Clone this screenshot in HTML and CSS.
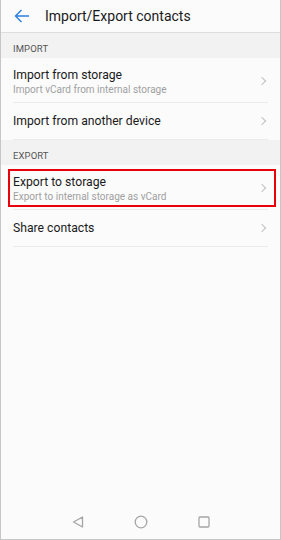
FILE: index.html
```html
<!DOCTYPE html>
<html>
<head>
<meta charset="utf-8">
<link rel="stylesheet" href="styles.css">
</head>
<body>
<div class="screen">
  <header class="appbar">
    <svg class="back" width="16" height="14" viewBox="0 0 16 14"><path d="M15 7H1.5M7.5 1L1.5 7l6 6" fill="none" stroke="#2b7fe0" stroke-width="1.4"/></svg>
    <div class="title">Import/Export contacts</div>
  </header>
  <div class="section">IMPORT</div>
  <div class="row tall">
    <div class="texts"><div class="t">Import from storage</div><div class="s">Import vCard from internal storage</div></div>
    <span class="chev"></span>
  </div>
  <div class="row">
    <div class="texts"><div class="t">Import from another device</div></div>
    <span class="chev"></span>
  </div>
  <div class="section">EXPORT</div>
  <div class="row tall hl">
    <div class="texts"><div class="t">Export to storage</div><div class="s">Export to internal storage as vCard</div></div>
    <span class="chev"></span>
  </div>
  <div class="row">
    <div class="texts"><div class="t">Share contacts</div></div>
    <span class="chev"></span>
  </div>
  <nav class="navbar">
    <svg width="12" height="12" viewBox="0 0 12 12"><path d="M10.5 1v10L1.5 6z" fill="none" stroke="#a5a5a5" stroke-width="1.3" stroke-linejoin="round"/></svg>
    <svg width="14" height="14" viewBox="0 0 14 14"><circle cx="7" cy="7" r="5.8" fill="none" stroke="#a5a5a5" stroke-width="1.3"/></svg>
    <svg width="12" height="12" viewBox="0 0 12 12"><rect x="1" y="1" width="10" height="10" rx="1" fill="none" stroke="#a5a5a5" stroke-width="1.3"/></svg>
  </nav>
</div>
</body>
</html>
```
FILE: styles.css
```css
html, body { margin: 0; padding: 0; }
body { font-family: Roboto, "Noto Sans", sans-serif; background: #fff; }
.screen {
  width: 281px; height: 540px; box-sizing: border-box;
  border: 1px solid #c6c6c6; border-top: none;
  background: #fbfbfb;
  display: flex; flex-direction: column;
}
.appbar {
  height: 32px; flex: none;
  display: flex; align-items: center;
  border-bottom: 1px solid #dedede;
}
.back { margin-left: 13px; }
.title { margin-left: 15px; font-size: 14px; color: #1a1a1a; }
.section {
  height: 25px; box-sizing: border-box; flex: none;
  background: #f2f2f2; color: #555; font-size: 9.5px;
  padding: 10px 0 0 12px; letter-spacing: 0.1px;
}
.row {
  height: 37px; flex: none; box-sizing: border-box;
  margin: 0 12px;
  display: flex; align-items: center; justify-content: space-between;
  border-bottom: 1px solid #ebebeb; position: relative;
}
.row.tall { height: 45px; padding-top: 2px; }
.t { font-size: 12.2px; color: #1a1a1a; }
.s { font-size: 10px; color: #a0a0a0; margin-top: 2px; }
.chev {
  width: 5px; height: 5px; border-right: 1px solid #c2c2c2; border-top: 1px solid #c2c2c2;
  transform: rotate(45deg); margin-right: 3px;
}
.hl::after {
  content: ""; position: absolute; left: -5px; right: -8px; top: 4px; bottom: 2px;
  border: 2px solid #e8000b;
}
.navbar {
  margin-top: auto; height: 32px; flex: none;
  display: flex; align-items: center; justify-content: center; gap: 50px;
  padding-bottom: 1px;
}
```
